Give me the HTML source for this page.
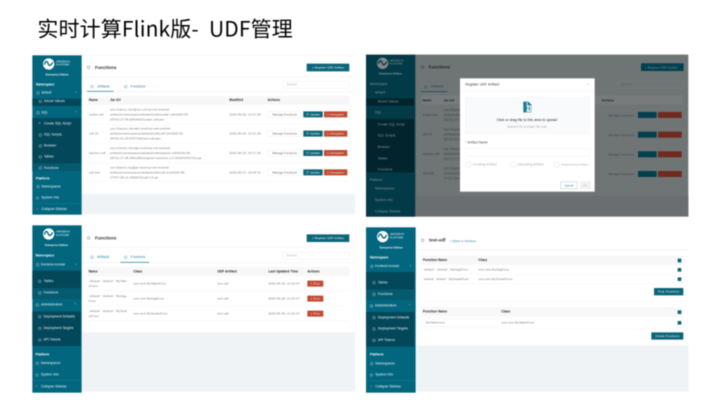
<!DOCTYPE html>
<html><head><meta charset="utf-8">
<style>
html,body{margin:0;padding:0;background:#fff;width:720px;height:404px;overflow:hidden}
#root{position:absolute;left:0;top:0;width:2160px;height:1212px;transform:scale(.33333);transform-origin:0 0;font-family:"Liberation Sans","Noto Sans CJK SC",sans-serif;filter:blur(1.25px);overflow:hidden;background:#fff}
.p{position:absolute;left:0;top:0;width:1px;height:1px}
.b{position:absolute}
.t{position:absolute;white-space:nowrap;line-height:0;font-size:9.6px;letter-spacing:.25px;color:#555}
.w{color:#f0fafc}
.h{color:#222;font-weight:bold}
.c{color:#777;font-size:9.4px}
.ic{position:absolute;border:1.5px solid currentColor;width:8px;height:8px;box-sizing:border-box;border-radius:1.5px}
.btn{position:absolute;background:#0d6579;color:#eef8fa;font-size:9px;letter-spacing:.2px;height:18px;line-height:18px;text-align:center;border-radius:1px;white-space:nowrap}
.red{position:absolute;background:#c04a33;color:#fbe9e4;font-size:9px;letter-spacing:.2px;height:18px;line-height:18px;text-align:center;border-radius:1px;white-space:nowrap}
.mg{position:absolute;background:#fff;border:1px solid #e6e6e6;color:#666;font-size:9px;height:18px;line-height:17px;text-align:center;box-sizing:border-box;white-space:nowrap;overflow:hidden}
.cb{position:absolute;width:11px;height:11px;background:#0d6579;border-radius:1px}
</style></head><body>
<div id="root">
<div class="t" style="left:112px;top:83px;font-size:63px;color:#000;letter-spacing:.4px;word-spacing:16px;font-family:'Noto Sans CJK SC',sans-serif;font-weight:400">实时计算Flink版- UDF管理</div>

<!-- PANEL 1 -->
<div class="p" style="left:0;top:0">
<div class="b" style="left:245px;top:166px;width:820px;height:478px;background:#fff"></div>
<div class="b" style="left:245px;top:582px;width:820px;height:60px;background:#f0f3f5"></div>
<div class="b" style="left:245px;top:166px;width:820px;height:1px;background:#eee"></div>
<div class="b" style="left:245px;top:229px;width:820px;height:2px;background:#f2f2f2"></div>
<div class="b" style="left:245px;top:274px;width:820px;height:2px;background:#f0f0f0"></div>
<div class="b" style="left:97px;top:166px;width:148px;height:478px;background:#03667f"></div>
<div class="b" style="left:97px;top:296px;width:145px;height:22px;background:#03475a"></div>
<div class="b" style="left:97px;top:354px;width:145px;height:158px;background:#03475a"></div>
<div class="b" style="left:97px;top:490px;width:145px;height:22px;background:#055a70"></div>
<div class="b" style="left:97px;top:610px;width:148px;height:1px;background:#2b8095"></div>
<svg class="b" style="left:128px;top:174px" width="36" height="36" viewBox="0 0 36 36"><circle cx="18" cy="18" r="17" fill="#fff"/><path d="M5 20c3-12 8-12 11-4s7 10 14-3" fill="none" stroke="#03667f" stroke-width="4"/></svg>
<div class="t w" style="left:168px;top:186px;font-size:7px">VERVERICA</div>
<div class="t w" style="left:168px;top:195px;font-size:7px">PLATFORM</div>
<div class="t" style="left:137px;top:224px;font-size:7.5px;color:#fff;font-weight:bold">Enterprise Edition</div>
<div class="t w" style="left:108px;top:254px;font-weight:bold;color:#fff">Namespace</div>
<div class="ic w" style="left:110px;top:275px"></div><div class="t w" style="left:124px;top:279px">default</div>
<div class="t w" style="left:227px;top:279px">›</div>
<div class="ic w" style="left:117px;top:300px"></div><div class="t w" style="left:132px;top:304px">Secret Values</div>
<div class="ic w" style="left:110px;top:334px"></div><div class="t w" style="left:124px;top:338px">SQL</div>
<div class="t w" style="left:223px;top:338px">⌃</div>
<div class="t w" style="left:116px;top:371px">+</div><div class="t w" style="left:132px;top:371px">Create SQL Script</div>
<div class="ic w" style="left:117px;top:401px"></div><div class="t w" style="left:132px;top:405px">SQL Scripts</div>
<div class="ic w" style="left:117px;top:434px"></div><div class="t w" style="left:132px;top:438px">Browser</div>
<div class="ic w" style="left:117px;top:467px"></div><div class="t w" style="left:132px;top:471px">Tables</div>
<div class="ic w" style="left:117px;top:500px"></div><div class="t w" style="left:132px;top:505px">Functions</div>
<div class="t w" style="left:108px;top:536px;font-weight:bold;color:#fff">Platform</div>
<div class="ic w" style="left:110px;top:556px"></div><div class="t w" style="left:124px;top:561px">Namespaces</div>
<div class="ic w" style="left:108px;top:590px;border-radius:50%"></div><div class="t w" style="left:124px;top:594px">System Info</div>
<div class="t w" style="left:110px;top:628px">‹</div><div class="t w" style="left:124px;top:628px">Collapse Sidebar</div>

<div class="ic" style="left:262px;top:198px;color:#444"></div>
<div class="t" style="left:285px;top:203px;font-size:13.5px;font-weight:bold;color:#333;letter-spacing:0">Functions</div>
<div class="btn" style="left:920px;top:191px;width:128px;height:23px;line-height:23px">+ Register UDF Artifact</div>
<div class="b" style="left:850px;top:244px;width:198px;height:22px;border:1px solid #e8e8e8;box-sizing:border-box"></div>
<div class="t" style="left:860px;top:255px;color:#bbb">Search</div>
<div class="ic" style="left:272px;top:256px;color:#177b92"></div><div class="t" style="left:292px;top:260px;color:#177b92">Artifacts</div>
<div class="b" style="left:261px;top:273px;width:80px;height:2px;background:#177b92"></div>
<div class="ic" style="left:373px;top:256px;color:#177b92"></div><div class="t" style="left:392px;top:260px;color:#177b92">Functions</div>

<div class="b" style="left:262px;top:288px;width:786px;height:26px;background:#f7f7f7"></div>
<div class="b" style="left:262px;top:372px;width:786px;height:1px;background:#efefef"></div>
<div class="b" style="left:262px;top:430px;width:786px;height:1px;background:#efefef"></div>
<div class="b" style="left:262px;top:488px;width:786px;height:1px;background:#efefef"></div>
<div class="b" style="left:262px;top:544px;width:786px;height:1px;background:#efefef"></div>
<div class="t h" style="left:267px;top:301px">Name</div><div class="t h" style="left:330px;top:301px">Jar Url</div><div class="t h" style="left:688px;top:301px">Modified</div><div class="t h" style="left:803px;top:301px">Actions</div>

<div class="t c" style="left:267px;top:343px">scalar-udf</div>
<div class="t c" style="left:330px;top:328px">oss://yaoxu.zlyz@oct.co/vvp-eal-test/eal-</div>
<div class="t c" style="left:330px;top:343px">artifacts/namespaces/default/udfs/scalar-udf/2020-05-</div>
<div class="t c" style="left:330px;top:358px">26T02:27:05.826340Z/scalar-udf.jars</div>
<div class="t c" style="left:688px;top:343px">2020-05-26, 10:27:05</div>
<div class="mg" style="left:802px;top:334px;width:104px">Manage Functions</div><div class="btn" style="left:910px;top:334px;width:58px">⊙ Update</div><div class="red" style="left:972px;top:334px;width:70px">▯ Unregister</div>

<div class="t c" style="left:267px;top:401px">udf-10</div>
<div class="t c" style="left:330px;top:386px">oss://baoxin.xlanabri.test/vvp-eal-test/eal-</div>
<div class="t c" style="left:330px;top:401px">artifacts/namespaces/default/udfs/udf-10/2020-05-</div>
<div class="t c" style="left:330px;top:416px">26T02:41:26.876733Z/test-udf.jars</div>
<div class="t c" style="left:688px;top:401px">2020-05-26, 10:41:26</div>
<div class="mg" style="left:802px;top:392px;width:104px">Manage Functions</div><div class="btn" style="left:910px;top:392px;width:58px">⊙ Update</div><div class="red" style="left:972px;top:392px;width:70px">▯ Unregister</div>

<div class="t c" style="left:267px;top:459px">bachen-udf</div>
<div class="t c" style="left:330px;top:444px">oss://chimin.hlongjin.test/vvp-eal-test/eal-</div>
<div class="t c" style="left:330px;top:459px">artifacts/namespaces/default/udfs/bachen-udf/2020-05-</div>
<div class="t c" style="left:330px;top:474px">25T12:17:35.206138Z/original-solutions-1.0-SNAPSHOT(2).jar</div>
<div class="t c" style="left:688px;top:459px">2020-05-25, 20:17:35</div>
<div class="mg" style="left:802px;top:450px;width:104px">Manage Functions</div><div class="btn" style="left:910px;top:450px;width:58px">⊙ Update</div><div class="red" style="left:972px;top:450px;width:70px">▯ Unregister</div>

<div class="t c" style="left:267px;top:517px">udf-test</div>
<div class="t c" style="left:330px;top:502px">oss://jiaenu.zlyj@ar.test/vvp-eal-test/eal-</div>
<div class="t c" style="left:330px;top:517px">artifacts/namespaces/default/udfs/udf-test/2020-05-</div>
<div class="t c" style="left:330px;top:532px">27T07:09:12.293567Z/udf-3.0.jar</div>
<div class="t c" style="left:688px;top:517px">2020-05-27, 15:09:12</div>
<div class="mg" style="left:802px;top:508px;width:104px">Manage Functions</div><div class="btn" style="left:910px;top:508px;width:58px">⊙ Update</div><div class="red" style="left:972px;top:508px;width:70px">▯ Unregister</div>
</div>

<!-- PANEL 2 -->
<div class="p" style="left:1080px;top:120px">
<div class="b" style="left:18px;top:44px;width:967px;height:486px;background:#6f7475"></div>
<div class="b" style="left:18px;top:44px;width:148px;height:486px;background:#033a47"></div>
<div class="b" style="left:18px;top:175px;width:144px;height:22px;background:#02242d"></div>
<div class="b" style="left:18px;top:237px;width:144px;height:160px;background:#02242d"></div>
<div class="b" style="left:166px;top:468px;width:819px;height:60px;background:#6a6e70"></div>
<svg class="b" style="left:50px;top:52px" width="36" height="36" viewBox="0 0 36 36"><circle cx="18" cy="18" r="17" fill="#838889"/><path d="M5 20c3-12 8-12 11-4s7 10 14-3" fill="none" stroke="#033a47" stroke-width="4"/></svg>
<div class="t" style="left:88px;top:64px;font-size:7px;color:#8a9a9e">VERVERICA</div>
<div class="t" style="left:88px;top:73px;font-size:7px;color:#8a9a9e">PLATFORM</div>
<div class="t" style="left:57px;top:102px;font-size:7.5px;color:#9aa8ab;font-weight:bold">Enterprise Edition</div>
<div class="t" style="left:29px;top:133px;color:#80959a">Namespace</div>
<div class="t" style="left:45px;top:159px;color:#80959a">default</div>
<div class="t" style="left:53px;top:185px;color:#80959a">Secret Values</div>
<div class="t" style="left:45px;top:218px;color:#80959a">SQL</div>
<div class="t" style="left:53px;top:254px;color:#80959a">Create SQL Script</div>
<div class="t" style="left:53px;top:288px;color:#80959a">SQL Scripts</div>
<div class="t" style="left:53px;top:322px;color:#80959a">Browser</div>
<div class="t" style="left:53px;top:356px;color:#80959a">Tables</div>
<div class="t" style="left:53px;top:389px;color:#80959a">Functions</div>
<div class="t" style="left:29px;top:421px;color:#80959a">Platform</div>
<div class="t" style="left:45px;top:447px;color:#80959a">Namespaces</div>
<div class="t" style="left:45px;top:481px;color:#80959a">System Info</div>
<div class="t" style="left:45px;top:516px;color:#80959a">Collapse Sidebar</div>
<div class="b" style="left:166px;top:44px;width:819px;height:1px;background:#7a7f80"></div>
<div class="t" style="left:206px;top:82px;font-size:13.5px;font-weight:bold;color:#1f2324;letter-spacing:0">Functions</div>
<div class="ic" style="left:184px;top:78px;color:#222"></div>
<div class="b" style="left:843px;top:70px;width:128px;height:23px;background:#03404e"></div>
<div class="t" style="left:855px;top:82px;font-size:9px;color:#80959a">+ Register UDF Artifact</div>
<div class="t" style="left:213px;top:141px;color:#1a4650">Artifacts</div>
<div class="ic" style="left:193px;top:137px;color:#1a4650"></div>
<div class="b" style="left:182px;top:154px;width:80px;height:2px;background:#0d4552"></div>
<div class="b" style="left:774px;top:124px;width:197px;height:22px;border:1px solid #7e8384;box-sizing:border-box"></div>
<div class="t" style="left:782px;top:135px;color:#5f6364">Search</div>
<div class="b" style="left:184px;top:167px;width:787px;height:26px;background:#777b7c"></div>
<div class="t" style="left:188px;top:182px;color:#202425;font-weight:bold">Name</div><div class="t" style="left:251px;top:182px;color:#202425;font-weight:bold">Jar Url</div><div class="t" style="left:725px;top:182px;color:#202425;font-weight:bold">Actions</div>
<div class="t" style="left:188px;top:226px;color:#404445">scalar-udf</div>
<div class="t" style="left:188px;top:284px;color:#404445">udf-10</div>
<div class="t" style="left:188px;top:343px;color:#404445">bachen-udf</div>
<div class="t" style="left:188px;top:402px;color:#404445">udf-test</div>
<div class="t" style="left:251px;top:211px;color:#404445">oss://baoxin</div><div class="t" style="left:251px;top:226px;color:#404445">artifacts/na</div><div class="t" style="left:251px;top:241px;color:#404445">26T02:27:0</div>
<div class="t" style="left:251px;top:269px;color:#404445">oss://baoxin</div><div class="t" style="left:251px;top:284px;color:#404445">artifacts/na</div><div class="t" style="left:251px;top:299px;color:#404445">26T02:41:2</div>
<div class="t" style="left:251px;top:328px;color:#404445">oss://baoxin</div><div class="t" style="left:251px;top:343px;color:#404445">artifacts/na</div><div class="t" style="left:251px;top:358px;color:#404445">25T12:17:3</div>
<div class="t" style="left:251px;top:387px;color:#404445">oss://jiaenu</div><div class="t" style="left:251px;top:402px;color:#404445">artifacts/na</div><div class="t" style="left:251px;top:417px;color:#404445">27T07:09:1</div>
<div class="t" style="left:745px;top:226px;color:#3c4041;font-size:9px">Manage Functions</div><div class="b" style="left:834px;top:216px;width:56px;height:18px;background:#03404e"></div><div class="b" style="left:894px;top:216px;width:71px;height:18px;background:#6f2a1d"></div>
<div class="t" style="left:745px;top:285px;color:#3c4041;font-size:9px">Manage Functions</div><div class="b" style="left:834px;top:275px;width:56px;height:18px;background:#03404e"></div><div class="b" style="left:894px;top:275px;width:71px;height:18px;background:#6f2a1d"></div>
<div class="t" style="left:745px;top:343px;color:#3c4041;font-size:9px">Manage Functions</div><div class="b" style="left:834px;top:334px;width:56px;height:18px;background:#03404e"></div><div class="b" style="left:894px;top:334px;width:71px;height:18px;background:#6f2a1d"></div>
<div class="t" style="left:745px;top:402px;color:#3c4041;font-size:9px">Manage Functions</div><div class="b" style="left:834px;top:393px;width:56px;height:18px;background:#03404e"></div><div class="b" style="left:894px;top:393px;width:71px;height:18px;background:#6f2a1d"></div>

<div class="b" style="left:300px;top:115px;width:404px;height:340px;background:#fff"></div>
<div class="t" style="left:316px;top:135px;font-size:10.3px;color:#333">Register UDF Artifact</div>
<div class="t" style="left:682px;top:135px;color:#aaa;font-size:10px">×</div>
<div class="b" style="left:300px;top:153px;width:404px;height:1px;background:#f0f0f0"></div>
<div class="b" style="left:316px;top:171px;width:373px;height:110px;background:#f8fafb;border:1px dashed #e8edf0;box-sizing:border-box"></div>
<svg class="b" style="left:488px;top:183px" width="28" height="36" viewBox="0 0 28 36"><path d="M2 2h15l9 9v23H2z" fill="#177b92"/><path d="M15 3v10h10v20H12V24l3-3-3-3V3z" fill="#dff0f4"/><path d="M20 17v11" stroke="#177b92" stroke-width="3"/></svg>
<div class="t" style="left:410px;top:241px;font-size:10.2px;color:#222">Click or drag file to this area to upload</div>
<div class="t" style="left:442px;top:260px;font-size:9px;color:#999">Support for a single file only</div>
<div class="t" style="left:316px;top:309px;font-size:9.6px;color:#444"><span style="color:#d33">*</span> Artifact Name</div>
<div class="b" style="left:316px;top:325px;width:373px;height:24px;border:1px solid #e6e9ea;box-sizing:border-box"></div>
<div class="b" style="left:317px;top:366px;width:16px;height:16px;border:1px solid #ccc;border-radius:50%;box-sizing:border-box"></div><div class="t" style="left:338px;top:374px;color:#aaa">Creating Artifact</div>
<div class="b" style="left:451px;top:366px;width:16px;height:16px;border:1px solid #ccc;border-radius:50%;box-sizing:border-box"></div><div class="t" style="left:472px;top:374px;color:#aaa">Uploading Artifact</div>
<div class="b" style="left:582px;top:366px;width:16px;height:16px;border:1px solid #ccc;border-radius:50%;box-sizing:border-box"></div><div class="t" style="left:604px;top:374px;color:#aaa;font-size:9px">Registering Artifact</div>
<div class="b" style="left:602px;top:425px;width:50px;height:22px;border:1.5px solid #7fb5c2;box-sizing:border-box;text-align:center;font-size:9px;line-height:20px;color:#177b92">Cancel</div>
<div class="b" style="left:660px;top:425px;width:32px;height:22px;background:#f3f3f3;border:1px solid #e6e6e6;box-sizing:border-box;text-align:center;font-size:9px;line-height:20px;color:#bbb">OK</div>
</div>

<!-- PANEL 3 -->
<div class="p" style="left:0;top:660px">
<div class="b" style="left:245px;top:17px;width:820px;height:320px;background:#fff"></div>
<div class="b" style="left:247px;top:337px;width:818px;height:178px;background:#f0f3f5"></div>
<div class="b" style="left:245px;top:81px;width:820px;height:2px;background:#f2f2f2"></div>
<div class="b" style="left:245px;top:127px;width:820px;height:2px;background:#f0f0f0"></div>
<div class="b" style="left:97px;top:16px;width:148px;height:502px;background:#03667f"></div>
<div class="b" style="left:97px;top:152px;width:145px;height:84px;background:#03475a"></div>
<div class="b" style="left:97px;top:204px;width:145px;height:32px;background:#055a70"></div>
<div class="b" style="left:97px;top:274px;width:145px;height:104px;background:#03475a"></div>
<div class="b" style="left:97px;top:480px;width:148px;height:1px;background:#2b8095"></div>
<svg class="b" style="left:128px;top:24px" width="36" height="36" viewBox="0 0 36 36"><circle cx="18" cy="18" r="17" fill="#fff"/><path d="M5 20c3-12 8-12 11-4s7 10 14-3" fill="none" stroke="#03667f" stroke-width="4"/></svg>
<div class="t w" style="left:168px;top:37px;font-size:7px">VERVERICA</div>
<div class="t w" style="left:168px;top:47px;font-size:7px">PLATFORM</div>
<div class="t" style="left:135px;top:76px;font-size:7.5px;color:#fff;font-weight:bold">Enterprise Edition</div>
<div class="t" style="left:107px;top:108px;font-weight:bold;color:#fff">Namespace</div>
<div class="ic w" style="left:109px;top:130px"></div><div class="t w" style="left:123px;top:134px">frontend-moxian</div><div class="t w" style="left:227px;top:134px">›</div>
<div class="ic w" style="left:115px;top:180px"></div><div class="t w" style="left:131px;top:184px">Tables</div>
<div class="ic w" style="left:115px;top:215px"></div><div class="t w" style="left:131px;top:219px">Functions</div>
<div class="ic w" style="left:108px;top:251px"></div><div class="t w" style="left:123px;top:255px">Administration</div><div class="t w" style="left:222px;top:255px">⌃</div>
<div class="ic w" style="left:115px;top:286px"></div><div class="t w" style="left:131px;top:290px">Deployment Defaults</div>
<div class="ic w" style="left:115px;top:321px"></div><div class="t w" style="left:131px;top:325px">Deployment Targets</div>
<div class="ic w" style="left:115px;top:356px"></div><div class="t w" style="left:131px;top:360px">API Tokens</div>
<div class="t" style="left:107px;top:404px;font-weight:bold;color:#fff">Platform</div>
<div class="ic w" style="left:108px;top:426px"></div><div class="t w" style="left:123px;top:430px">Namespaces</div>
<div class="ic w" style="left:107px;top:461px;border-radius:50%"></div><div class="t w" style="left:123px;top:465px">System Info</div>
<div class="t w" style="left:108px;top:500px">‹</div><div class="t w" style="left:123px;top:500px">Collapse Sidebar</div>

<div class="ic" style="left:262px;top:50px;color:#444"></div>
<div class="t" style="left:285px;top:55px;font-size:13.5px;font-weight:bold;color:#333;letter-spacing:0">Functions</div>
<div class="btn" style="left:920px;top:43px;width:128px;height:23px;line-height:23px">+ Register UDF Artifact</div>
<div class="b" style="left:850px;top:96px;width:198px;height:22px;border:1px solid #e8e8e8;box-sizing:border-box"></div>
<div class="t" style="left:859px;top:107px;color:#bbb">Search</div>
<div class="ic" style="left:272px;top:108px;color:#177b92"></div><div class="t" style="left:291px;top:112px;color:#177b92">Artifacts</div>
<div class="ic" style="left:373px;top:108px;color:#177b92"></div><div class="t" style="left:392px;top:112px;color:#177b92">Functions</div>
<div class="b" style="left:361px;top:126px;width:86px;height:2px;background:#177b92"></div>

<div class="b" style="left:262px;top:140px;width:786px;height:28px;background:#f7f7f7"></div>
<div class="b" style="left:262px;top:212px;width:786px;height:1px;background:#efefef"></div>
<div class="b" style="left:262px;top:257px;width:786px;height:1px;background:#efefef"></div>
<div class="b" style="left:262px;top:302px;width:786px;height:1px;background:#efefef"></div>
<div class="t h" style="left:266px;top:155px">Name</div><div class="t h" style="left:400px;top:155px">Class</div><div class="t h" style="left:652px;top:155px">UDF Artifact</div><div class="t h" style="left:805px;top:155px">Last Updated Time</div><div class="t h" style="left:922px;top:155px">Actions</div>

<div class="t c" style="left:266px;top:183px">`default`.`default`.`MyTabl</div><div class="t c" style="left:266px;top:198px">eFunc`</div>
<div class="t c" style="left:400px;top:190px">com.test.MyTableFunc</div><div class="t c" style="left:652px;top:190px">test-udf</div><div class="t c" style="left:805px;top:190px">2020-05-28, 11:03:47</div>
<div class="red" style="left:922px;top:182px;width:48px">▯ Drop</div>

<div class="t c" style="left:266px;top:228px">`default`.`default`.`MyAgg</div><div class="t c" style="left:266px;top:243px">Func`</div>
<div class="t c" style="left:400px;top:235px">com.test.MyAggFunc</div><div class="t c" style="left:652px;top:235px">test-udf</div><div class="t c" style="left:805px;top:235px">2020-05-28, 11:03:47</div>
<div class="red" style="left:922px;top:227px;width:48px">▯ Drop</div>

<div class="t c" style="left:266px;top:273px">`default`.`default`.`MyScal</div><div class="t c" style="left:266px;top:288px">arFunc`</div>
<div class="t c" style="left:400px;top:280px">com.test.MyScalarFunc</div><div class="t c" style="left:652px;top:280px">test-udf</div><div class="t c" style="left:805px;top:280px">2020-05-28, 11:03:47</div>
<div class="red" style="left:922px;top:272px;width:48px">▯ Drop</div>
</div>

<!-- PANEL 4 -->
<div class="p" style="left:1080px;top:660px">
<div class="b" style="left:170px;top:377px;width:815px;height:138px;background:#f0f3f5"></div>
<div class="b" style="left:170px;top:88px;width:815px;height:2px;background:#f2f2f2"></div>
<div class="b" style="left:18px;top:22px;width:149px;height:496px;background:#03667f"></div>
<div class="b" style="left:18px;top:156px;width:145px;height:84px;background:#03475a"></div>
<div class="b" style="left:18px;top:208px;width:145px;height:32px;background:#055a70"></div>
<div class="b" style="left:18px;top:276px;width:145px;height:104px;background:#03475a"></div>
<div class="b" style="left:18px;top:482px;width:149px;height:1px;background:#2b8095"></div>
<svg class="b" style="left:50px;top:32px" width="36" height="36" viewBox="0 0 36 36"><circle cx="18" cy="18" r="17" fill="#fff"/><path d="M5 20c3-12 8-12 11-4s7 10 14-3" fill="none" stroke="#03667f" stroke-width="4"/></svg>
<div class="t w" style="left:90px;top:44px;font-size:7px">VERVERICA</div>
<div class="t w" style="left:90px;top:54px;font-size:7px">PLATFORM</div>
<div class="t" style="left:59px;top:83px;font-size:7.5px;color:#fff;font-weight:bold">Enterprise Edition</div>
<div class="t" style="left:30px;top:114px;font-weight:bold;color:#fff">Namespace</div>
<div class="ic w" style="left:31px;top:135px"></div><div class="t w" style="left:45px;top:139px">frontend-moxian</div><div class="t w" style="left:150px;top:139px">›</div>
<div class="ic w" style="left:38px;top:184px"></div><div class="t w" style="left:54px;top:188px">Tables</div>
<div class="ic w" style="left:38px;top:219px"></div><div class="t w" style="left:54px;top:223px">Functions</div>
<div class="ic w" style="left:30px;top:254px"></div><div class="t w" style="left:45px;top:258px">Administration</div><div class="t w" style="left:145px;top:258px">⌃</div>
<div class="ic w" style="left:38px;top:289px"></div><div class="t w" style="left:54px;top:293px">Deployment Defaults</div>
<div class="ic w" style="left:38px;top:323px"></div><div class="t w" style="left:54px;top:327px">Deployment Targets</div>
<div class="ic w" style="left:38px;top:357px"></div><div class="t w" style="left:54px;top:361px">API Tokens</div>
<div class="t" style="left:30px;top:405px;font-weight:bold;color:#fff">Platform</div>
<div class="ic w" style="left:31px;top:427px"></div><div class="t w" style="left:46px;top:431px">Namespaces</div>
<div class="ic w" style="left:30px;top:461px;border-radius:50%"></div><div class="t w" style="left:46px;top:465px">System Info</div>
<div class="t w" style="left:31px;top:500px">‹</div><div class="t w" style="left:46px;top:500px">Collapse Sidebar</div>

<div class="ic" style="left:184px;top:57px;color:#444"></div>
<div class="t" style="left:207px;top:61px;font-size:13.5px;font-weight:bold;color:#333;letter-spacing:0">test-udf</div>
<div class="t" style="left:271px;top:63px;font-size:9px;color:#177b92">▯ Back to Artifacts</div>

<div class="b" style="left:184px;top:107px;width:786px;height:28px;background:#f7f7f7"></div>
<div class="b" style="left:184px;top:163px;width:786px;height:1px;background:#efefef"></div>
<div class="b" style="left:184px;top:191px;width:786px;height:1px;background:#efefef"></div>
<div class="t h" style="left:189px;top:121px">Function Name</div><div class="t h" style="left:355px;top:121px">Class</div>
<div class="cb" style="left:953px;top:116px"></div>
<div class="t c" style="left:189px;top:149px">`default`.`default`.`MyAggFunc`</div><div class="t c" style="left:355px;top:149px">com.test.MyAggFunc</div><div class="cb" style="left:953px;top:144px"></div>
<div class="t c" style="left:189px;top:177px;letter-spacing:0">`default`.`default`.`MyScalarFunc`</div><div class="t c" style="left:355px;top:177px">com.test.MyScalarFunc</div><div class="cb" style="left:953px;top:172px"></div>
<div class="btn" style="left:882px;top:204px;width:88px;height:22px;line-height:22px">Drop Functions</div>
<div class="b" style="left:184px;top:243px;width:786px;height:1px;background:#f2f2f2"></div>

<div class="b" style="left:184px;top:262px;width:786px;height:28px;background:#f7f7f7"></div>
<div class="b" style="left:184px;top:325px;width:786px;height:1px;background:#efefef"></div>
<div class="t h" style="left:189px;top:276px">Function Name</div><div class="t h" style="left:424px;top:276px">Class</div>
<div class="cb" style="left:953px;top:271px"></div>
<div class="b" style="left:190px;top:296px;width:223px;height:24px;border:1px solid #e6e9ea;box-sizing:border-box"></div>
<div class="t c" style="left:197px;top:308px">MyTableFunc</div><div class="t c" style="left:424px;top:308px">com.test.MyTableFunc</div><div class="cb" style="left:953px;top:303px"></div>
<div class="btn" style="left:874px;top:337px;width:96px;height:22px;line-height:22px">Create Functions</div>
</div>
</div>
</body></html>
